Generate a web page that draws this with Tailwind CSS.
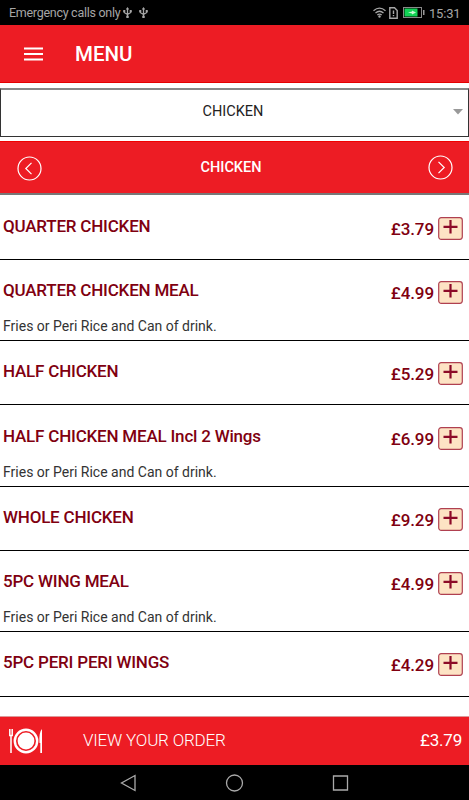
<!DOCTYPE html>
<html lang="en">

<head>
  <meta charset="UTF-8" />
  <meta name="viewport" content="width=device-width, initial-scale=1.0" />
  <title>Menu</title>
  <script src="https://cdn.jsdelivr.net/npm/@tailwindcss/browser@4"></script>
</head>

<body class="bg-white font-[Roboto,sans-serif] w-full h-[800px] flex flex-col overflow-hidden">

  <!-- Status bar -->
  <div class="h-[25px] shrink-0 bg-black text-[#a6a6a6] flex items-center px-[9px]">
    <span class="text-[12.5px] leading-none tracking-[-0.28px] whitespace-nowrap pt-[2px] w-[111px]">Emergency calls only</span>
    <svg class="w-[9px] h-[11px] ml-[3px]" viewBox="0 0 9 11" fill="none" stroke="currentColor" stroke-width="1.3">
      <path d="M4.5 1V10M1.2 3.5V5.5L4.500 7.500L7.800 5.500V3.500" />
      <path d="M4.5 0L6.2 2.5H2.8ZM.3 3h2v2h-2ZM6.7 3h2v2h-2ZM3.3 8.8h2.400v2.200H3.300Z" fill="currentColor" stroke="none" />
    </svg>
    <svg class="w-[9px] h-[11px] ml-[7px]" viewBox="0 0 9 11" fill="none" stroke="currentColor" stroke-width="1.3">
      <path d="M4.5 1V10M1.2 3.5V5.5L4.500 7.500L7.800 5.500V3.500" />
      <path d="M4.5 0L6.2 2.5H2.8ZM.3 3h2v2h-2ZM6.7 3h2v2h-2ZM3.3 8.8h2.400v2.200H3.300Z" fill="currentColor" stroke="none" />
    </svg>
    <svg class="w-[13px] h-[11px] ml-auto" viewBox="0 0 13 11" fill="none" stroke="currentColor" stroke-width="1.3">
      <path d="M.5 3.8Q6.5-1.5 12.5 3.8M2.5 6Q6.5 2.5 10.5 6M4.3 8Q6.5 6.2 8.7 8" />
      <circle cx="6.5" cy="9.5" r="1.2" fill="currentColor" stroke="none" />
    </svg>
    <svg class="w-[9px] h-[12px] ml-[3px]" viewBox="0 0 9 12" fill="none" stroke="currentColor" stroke-width="1.4">
      <path d="M.8.8H5.5L8.2 3.5V11.2H.8ZM4.5 3.5V7M4.5 8V9.3" />
    </svg>
    <svg class="w-[22px] h-[11px] ml-[5px]" viewBox="0 0 22 11">
      <rect x=".5" y=".5" width="18" height="10" fill="none" stroke="#888" />
      <rect x="1.5" y="1.5" width="13" height="8" fill="#12d255" />
      <path d="M5 5.5L9 4.5V3.500L13 5.500L9 7.500V6.500Z" fill="#c8f7d4" />
      <rect x="20" y="3" width="1.5" height="5" fill="#999" />
    </svg>
    <span class="text-[13px] leading-none tracking-[-0.2px] ml-[4px] w-[31px] whitespace-nowrap pt-px">15:31</span>
  </div>

  <!-- App header -->
  <div class="h-[58px] shrink-0 bg-[#ed1c24] border-b border-[#e60000] flex items-center pl-6 text-white">
    <svg class="w-[19px] h-[14px] mt-px" viewBox="0 0 19 14" stroke="#fff" stroke-width="2">
      <path d="M0 1.5H19M0 7H19M0 12.5H19" />
    </svg>
    <h1 class="text-[20.5px] leading-none font-medium ml-8 pt-[2px]">MENU</h1>
  </div>

  <!-- Category select -->
  <div class="mt-[5px] h-[49px] shrink-0 border border-[#333] border-t-[#888] border-t-2 flex items-center relative">
    <span class="w-full text-center text-[14.5px] leading-none text-[#222] pb-px pr-[3px]">CHICKEN</span>
    <svg class="absolute right-[5px] top-[19px] w-[10px] h-[6px]" viewBox="0 0 10 6" fill="#999">
      <path d="M0 0H10L5 5.5Z" />
    </svg>
  </div>

  <!-- Category bar -->
  <div class="mt-[4px] h-[54px] shrink-0 bg-[#ed1c24] border-t border-[#f00000] flex items-center justify-between pl-[17px] pr-[16px] text-white shadow-[inset_0_-2px_0_#777]">
    <svg class="w-[25px] h-[25px] mb-px" viewBox="0 0 25 25" fill="none" stroke="#fff" stroke-width="1.2">
      <circle cx="12.5" cy="12.5" r="11.5" />
      <path d="M14.5 6.8L8.8 12.5L14.5 18.2" />
    </svg>
    <span class="text-[14.5px] leading-none font-medium -ml-[8px]">CHICKEN</span>
    <svg class="w-[25px] h-[25px] mb-[2px]" viewBox="0 0 25 25" fill="none" stroke="#fff" stroke-width="1.2">
      <circle cx="12.5" cy="12.5" r="11.5" />
      <path d="M10.5 6.8L16.2 12.5L10.5 18.2" />
    </svg>
  </div>

  <!-- Menu items -->
  <ul id="menu-list" class="flex-1 text-[#800010]"></ul>

  <!-- Order bar -->
  <div class="h-[49px] shrink-0 bg-[#ed1c24] border-t border-[#d99] flex items-center pl-[9px] pr-[7px] text-white">
    <svg class="w-[34px] h-[26px]" viewBox="0 0 34 26" fill="none" stroke="#fff">
      <path d="M.8 1V7.5H3.2V1M2 7V25" stroke-width="1.5" />
      <circle cx="17" cy="13" r="11.2" stroke-width="2.4" />
      <circle cx="17" cy="13" r="8.4" fill="#fff" stroke="none" />
      <path d="M33 1V25H31.300V15H30.500Q29.800 4 33 1Z" fill="#fff" stroke="none" />
    </svg>
    <span class="text-[17px] leading-none tracking-[-0.2px] font-light ml-[40px] pb-[2px]">VIEW YOUR ORDER</span>
    <span class="text-[17px] leading-none tracking-[-0.2px] ml-auto pb-[2px]">£3.79</span>
  </div>

  <!-- Android navigation -->
  <div class="h-[35px] shrink-0 bg-black flex items-center justify-center">
    <svg class="w-[230px] h-[18px]" viewBox="0 0 230 18" fill="none" stroke="#aaa" stroke-width="1.3">
      <path d="M15 1.5V16.5L1.5 9Z" />
      <circle cx="114.500" cy="9" r="8" />
      <path d="M213.500 2H227.500V16H213.500Z" />
    </svg>
  </div>

  <script>
    const note = "Fries or Peri Rice and Can of drink.";
    const items = [
      { name: "QUARTER CHICKEN", price: "£3.79", size: "h-[65px] pt-[21px]" },
      { name: "QUARTER CHICKEN MEAL", price: "£4.99", size: "h-[81px] pt-[20px]", note },
      { name: "HALF CHICKEN", price: "£5.29", size: "h-[64px] pt-[20px]" },
      { name: "HALF CHICKEN MEAL Incl 2 Wings", price: "£6.99", size: "h-[82px] pt-[21px]", note },
      { name: "WHOLE CHICKEN", price: "£9.29", size: "h-[64px] pt-[20px]" },
      { name: "5PC WING MEAL", price: "£4.99", size: "h-[81px] pt-[20px]", note },
      { name: "5PC PERI PERI WINGS", price: "£4.29", size: "h-[65px] pt-[20px]" },
    ];

    document.getElementById("menu-list").innerHTML = items.map(item => `
      <li class="${item.size} border-b border-black pl-[3px] pr-[6px]">
        <div class="flex items-start h-[22px]">
          <span class="text-[17px] leading-[21px] tracking-[-0.2px] font-medium whitespace-nowrap">${item.name}</span>
          <span class="text-[17px] leading-[26px] tracking-[-0.1px] font-medium ml-auto">${item.price}</span>
          <svg class="w-[25px] h-[23px] ml-[4px] mt-px" viewBox="0 0 25 23">
            <rect x=".7" y=".7" width="23.6" height="21.6" rx="2.5" fill="#fde3c4" stroke="#b04050" stroke-width="1.2" />
            <path d="M5.5 9.8H19.5M12.5 3V16.5" stroke="#8c0a28" stroke-width="2.2" />
          </svg>
        </div>
        ${item.note ? `<p class="text-[14px] leading-[18px] text-[#333] mt-[15px]">${item.note}</p>` : ""}
      </li>`).join("");
  </script>

</body>

</html>
